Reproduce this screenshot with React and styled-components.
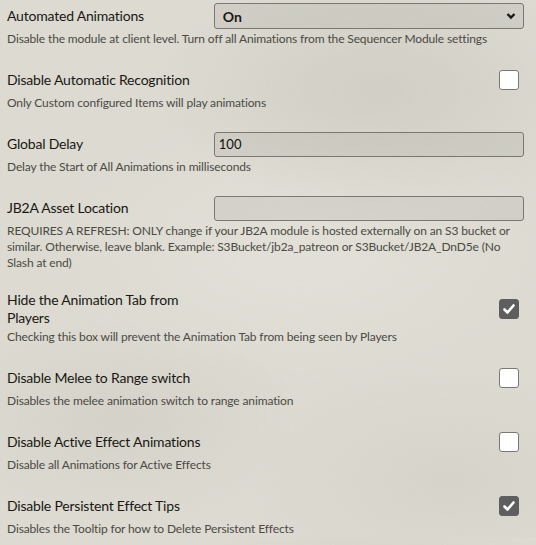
import React from 'react';
import styled, { createGlobalStyle } from 'styled-components';

const GlobalStyle = createGlobalStyle`
  html, body {
    margin: 0;
    padding: 0;
  }
  body {
    background-color: #dcdad1;
    background-image:
      radial-gradient(ellipse 220px 120px at 380px 90px, rgba(200, 197, 186, 0.55), transparent),
      radial-gradient(ellipse 180px 100px at 120px 420px, rgba(205, 202, 192, 0.5), transparent),
      radial-gradient(ellipse 260px 140px at 300px 250px, rgba(230, 228, 220, 0.6), transparent),
      radial-gradient(ellipse 200px 110px at 450px 480px, rgba(208, 205, 195, 0.5), transparent);
    font-family: Lato, "Liberation Sans", sans-serif;
    color: #191813;
  }
`;

const settings = [
  {
    label: 'Automated Animations',
    hint: 'Disable the module at client level. Turn off all Animations from the Sequencer Module settings',
    type: 'select',
    value: 'On'
  },
  {
    label: 'Disable Automatic Recognition',
    hint: 'Only Custom configured Items will play animations',
    type: 'checkbox',
    value: false
  },
  {
    label: 'Global Delay',
    hint: 'Delay the Start of All Animations in milliseconds',
    type: 'text',
    value: '100'
  },
  {
    label: 'JB2A Asset Location',
    hint:
      'REQUIRES A REFRESH: ONLY change if your JB2A module is hosted externally on an S3 bucket or similar. Otherwise, leave blank. Example: S3Bucket/jb2a_patreon or S3Bucket/JB2A_DnD5e (No Slash at end)',
    type: 'text',
    value: ''
  },
  {
    label: 'Hide the Animation Tab from Players',
    hint: 'Checking this box will prevent the Animation Tab from being seen by Players',
    type: 'checkbox',
    value: true
  },
  {
    label: 'Disable Melee to Range switch',
    hint: 'Disables the melee animation switch to range animation',
    type: 'checkbox',
    value: false
  },
  {
    label: 'Disable Active Effect Animations',
    hint: 'Disable all Animations for Active Effects',
    type: 'checkbox',
    value: false
  },
  {
    label: 'Disable Persistent Effect Tips',
    hint: 'Disables the Tooltip for how to Delete Persistent Effects',
    type: 'checkbox',
    value: true
  }
];

const Chevron = () => (
  <svg width="10" height="8" viewBox="0 0 10 8">
    <path d="M1.5 2 L5 5.5 L8.5 2" fill="none" stroke="#191813" strokeWidth="2.4" />
  </svg>
);

const Check = () => (
  <svg width="14" height="14" viewBox="0 0 14 14">
    <path d="M2.5 7.5 L5.5 10.5 L11.5 3.5" fill="none" stroke="#fff" strokeWidth="2.6" strokeLinecap="round" strokeLinejoin="round" />
  </svg>
);

const renderField = setting => {
  if (setting.type === 'select') {
    return (
      <Select>
        <span>{setting.value}</span>
        <Chevron />
      </Select>
    );
  }
  if (setting.type === 'checkbox') {
    return <Checkbox checked={setting.value}>{setting.value && <Check />}</Checkbox>;
  }
  return <TextInput>{setting.value}</TextInput>;
};

export default function App() {
  return (
    <Wrapper>
      <GlobalStyle />
      {settings.map(setting => (
        <FormGroup key={setting.label}>
          <Label>{setting.label}</Label>
          <Fields align={setting.type === 'checkbox' ? 'flex-end' : 'stretch'}>
            {renderField(setting)}
          </Fields>
          <Notes>{setting.hint}</Notes>
        </FormGroup>
      ))}
    </Wrapper>
  );
}

const Wrapper = styled.div`
  padding: 3px 12px 0 7px;
  display: flex;
  flex-direction: column;
  gap: 20px;
`;

const FormGroup = styled.div`
  display: flex;
  flex-wrap: wrap;
  align-items: center;
`;

const Label = styled.label`
  flex: 2;
  min-height: 26px;
  display: flex;
  align-items: center;
  font-size: 14px;
  letter-spacing: -0.2px;
  line-height: 18px;
  color: #191813;
`;

const Fields = styled.div`
  flex: 3;
  display: flex;
  justify-content: ${p => p.align};
  padding-right: ${p => (p.align === 'flex-end' ? '5px' : '0')};
`;

const Select = styled.div`
  flex: 1;
  height: 26px;
  box-sizing: border-box;
  border: 1px solid #7a7971;
  border-radius: 3px;
  background: rgba(0, 0, 0, 0.05);
  display: flex;
  align-items: center;
  justify-content: space-between;
  padding: 0 7px 0 8px;
  font-size: 14px;
  font-weight: 700;
`;

const TextInput = styled.div`
  flex: 1;
  height: 25px;
  box-sizing: border-box;
  border: 1px solid #7a7971;
  border-radius: 3px;
  background: rgba(0, 0, 0, 0.05);
  display: flex;
  align-items: center;
  padding: 0 4px;
  font-size: 13px;
  color: #111;
`;

const Checkbox = styled.div`
  width: 20px;
  height: 20px;
  box-sizing: border-box;
  border-radius: 3px;
  border: 1px solid ${p => (p.checked ? '#5e5e5e' : '#7a7971')};
  background: ${p => (p.checked ? '#5e5e5e' : '#ffffff')};
  display: flex;
  align-items: center;
  justify-content: center;
`;

const Notes = styled.p`
  flex: 0 0 100%;
  margin: 2px 0 0;
  font-size: 12px;
  letter-spacing: -0.13px;
  line-height: 16px;
  color: #4b4a44;
`;
